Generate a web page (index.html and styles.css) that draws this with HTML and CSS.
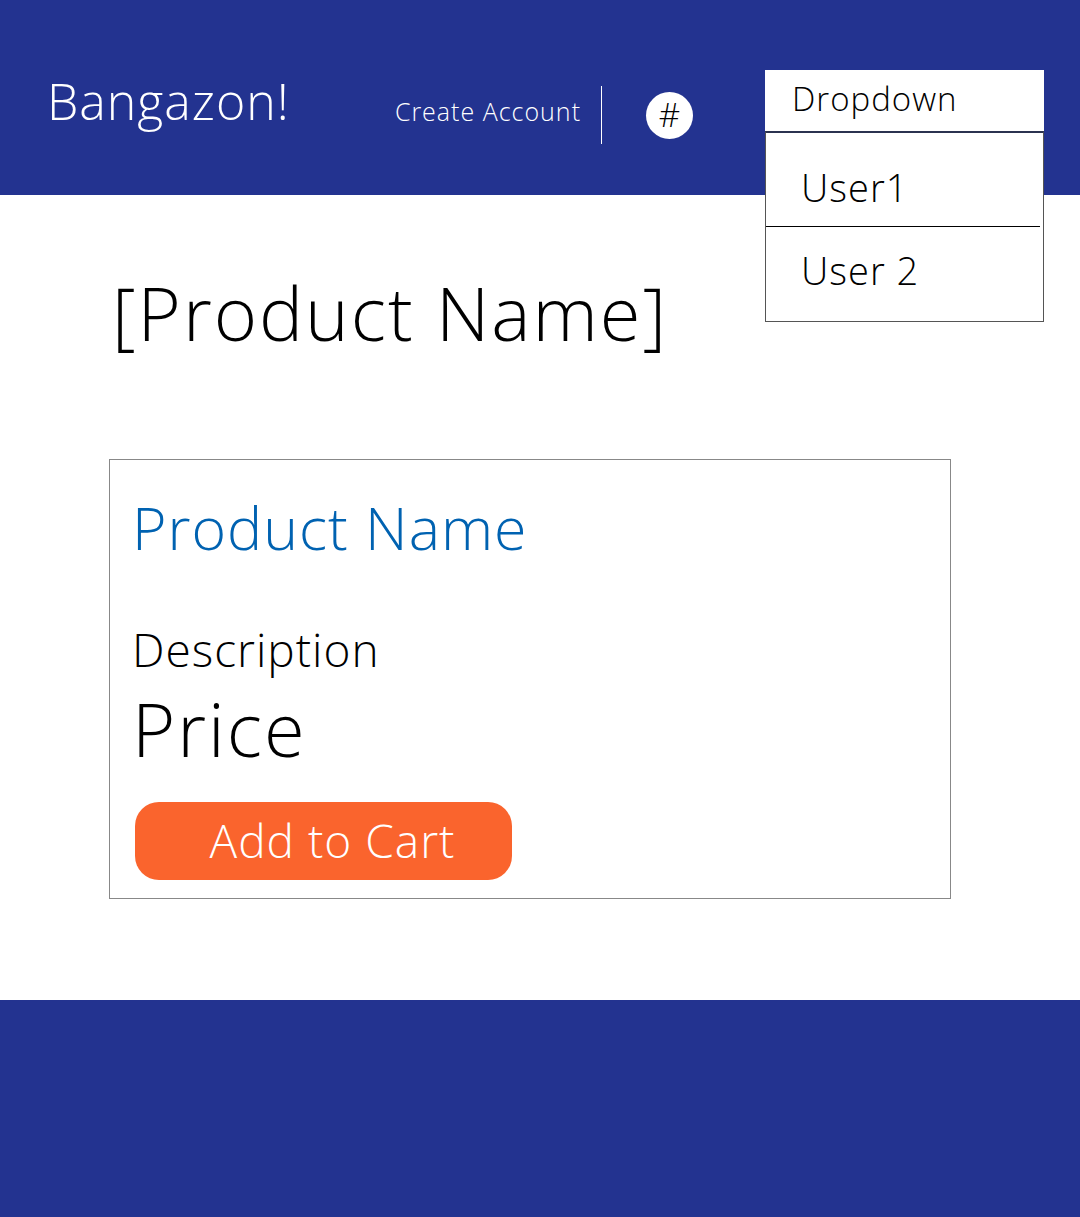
FILE: index.html
```html
<!DOCTYPE html>
<html lang="en">
<head>
  <meta charset="utf-8">
  <meta name="viewport" content="width=device-width, initial-scale=1">
  <title>Bangazon!</title>
  <link rel="stylesheet" href="styles.css">
</head>
<body>
  <header class="site-header">
    <a class="brand" href="#">Bangazon!</a>
    <nav class="site-nav">
      <a class="nav-link" href="#">Create Account</a>
      <a class="cart-count" href="#">#</a>
    </nav>
    <div class="dropdown">
      <button class="dropdown-toggle" type="button" aria-expanded="true" aria-controls="user-menu">Dropdown</button>
      <ul class="dropdown-menu" id="user-menu">
        <li class="dropdown-item"><a class="user-link" href="#">User1</a></li>
        <li class="dropdown-item"><a class="user-link" href="#">User 2</a></li>
      </ul>
    </div>
  </header>

  <main class="page">
    <h1 class="page-title">[Product Name]</h1>
    <article class="product-card">
      <h2 class="product-name">Product Name</h2>
      <p class="product-description">Description</p>
      <p class="product-price">Price</p>
      <button class="add-to-cart" type="button">Add to Cart</button>
    </article>
  </main>

  <footer class="site-footer"></footer>
</body>
</html>
```
FILE: styles.css
```css
* {
  box-sizing: border-box;
}

body {
  display: flex;
  flex-direction: column;
  min-height: 100vh;
  margin: 0;
  background: #fff;
  color: #000;
  font-family: "Open Sans", "Noto Sans", sans-serif;
  font-weight: 300;
  letter-spacing: 1px;
}

a {
  color: inherit;
  text-decoration: none;
}

button {
  border: 0;
  font: inherit;
  letter-spacing: inherit;
  cursor: pointer;
}

/* Header */
.site-header {
  display: flex;
  align-items: flex-start;
  min-height: 195px;
  padding: 70px 36px 0 47px;
  background: #233390;
  color: #fff;
}

.brand {
  margin-right: auto;
  font-size: 50px;
  line-height: 62px;
}

.site-nav {
  display: flex;
  align-items: center;
  gap: 44px;
  margin-right: 72px;
  padding-top: 16px;
}

.nav-link {
  padding: 0 20px 8px 0;
  border-right: 1px solid #fff;
  font-size: 25px;
  line-height: 50px;
}

.cart-count {
  width: 47px;
  height: 47px;
  border-radius: 50%;
  background: #fff;
  color: #000;
  font-size: 33px;
  line-height: 45px;
  letter-spacing: 0;
  text-align: center;
}

/* User dropdown */
.dropdown {
  position: relative;
  width: 279px;
  color: #000;
}

.dropdown-toggle {
  display: block;
  width: 100%;
  padding: 0 0 3px 27px;
  background: #fff;
  color: inherit;
  font-size: 33px;
  line-height: 58px;
  text-align: left;
}

.dropdown-menu {
  position: absolute;
  top: 100%;
  right: 0;
  left: 0;
  margin: 0;
  padding: 11px 3px 12px 0;
  border: 1px solid #555;
  border-top: 2px solid #2b3350;
  background: #fff;
  list-style: none;
}

.dropdown-item {
  padding: 9px 0 5px 35px;
  font-size: 38px;
  line-height: 68px;
}

.dropdown-item + .dropdown-item {
  border-top: 1px solid #000;
}

.user-link {
  display: block;
}

/* Product page */
.page {
  padding: 68px 129px 101px 109px;
}

.page-title {
  margin: 0 0 96px;
  padding-left: 3px;
  font-size: 74px;
  font-weight: 300;
  line-height: 100px;
  letter-spacing: 2px;
}

.product-card {
  padding: 26px 22px 18px;
  border: 1px solid #888;
}

.product-name {
  margin: 0 0 49px;
  color: #0062b1;
  font-size: 59px;
  font-weight: 300;
  line-height: 82px;
}

.product-description {
  margin: 0;
  font-size: 46px;
  line-height: 64px;
}

.product-price {
  margin: 0 0 25px;
  font-size: 74px;
  line-height: 96px;
  letter-spacing: 2px;
}

.add-to-cart {
  display: block;
  width: 377px;
  max-width: 100%;
  margin: 0 3px;
  padding: 0 0 2px 18px;
  border-radius: 24px;
  background: #fa642d;
  color: #fff;
  font-size: 46px;
  line-height: 76px;
}

/* Footer */
.site-footer {
  flex: 1;
  min-height: 217px;
  background: #233390;
}
```
